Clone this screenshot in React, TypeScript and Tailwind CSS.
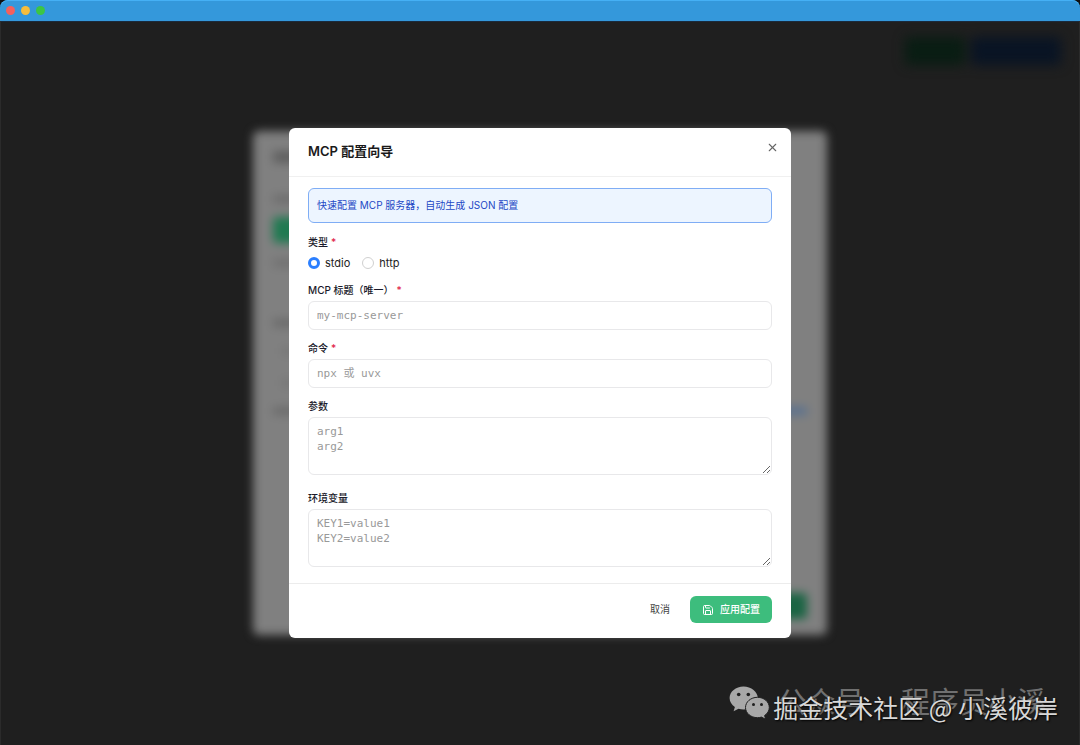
import React, { useState } from 'react';
import { Save, X } from 'lucide-react';

interface FieldProps {
  id: string;
  label: string;
  required?: boolean;
  children: React.ReactNode;
}

const inputClass =
  "block w-full rounded-md border border-[#e8e8ea] bg-white px-2 text-[11px] leading-[15px] text-gray-800 placeholder:text-[#999999] outline-none font-['DejaVu_Sans_Mono','Noto_Sans_CJK_SC',monospace]";

const Required = () => <span className="ml-[3px] text-[#e11d48]">*</span>;

const Field: React.FC<FieldProps> = ({ id, label, required, children }) => (
  <div className="flex flex-col gap-[3px]">
    <label htmlFor={id} className="block leading-[15px] font-medium text-[#1a1a2a]">
      {label}
      {required && <Required />}
    </label>
    {children}
  </div>
);

interface RadioProps {
  value: string;
  checked: boolean;
  onChange: (value: string) => void;
}

const TypeRadio: React.FC<RadioProps> = ({ value, checked, onChange }) => (
  <label className="flex items-center gap-[5px] text-[11px] text-[#222222]">
    <input
      type="radio"
      name="type"
      value={value}
      checked={checked}
      onChange={() => onChange(value)}
      className="size-3 appearance-none rounded-full border border-[#d0d0d0] bg-white checked:border-[3px] checked:border-[#2b7fff]"
    />
    {value}
  </label>
);

// Blurred page and first dialog that stay visible under the overlay
const Backdrop = () => (
  <div aria-hidden="true" className="absolute inset-0 flex overflow-hidden">
    <div className="absolute inset-x-0 top-0 flex justify-end gap-1.5 px-[18px] pt-4 blur-[6px]">
      <div className="h-7 w-[60px] rounded bg-[#091d13]" />
      <div className="h-7 w-[90px] rounded bg-[#091424]" />
    </div>
    <div className="m-auto flex h-[504px] w-[574px] flex-col rounded-md bg-[#808080] px-5 pt-5 pb-4 blur-[5px]">
      <div className="h-3 w-20 bg-[#606060]" />
      <div className="mt-8 h-2 w-16 bg-[#6c6c6c]" />
      <div className="mt-3.5 h-[26px] w-20 rounded bg-[#1f7a51]" />
      <div className="mt-4 h-2 w-16 bg-[#707070]" />
      <div className="mt-[52px] h-2 w-16 bg-[#696969]" />
      <div className="mt-5 ml-2 h-2 w-16 bg-[#777777]" />
      <div className="mt-6 ml-2 h-2 w-16 bg-[#777777]" />
      <div className="mt-5 flex justify-between">
        <div className="h-2 w-16 bg-[#6a6a6a]" />
        <div className="h-2 w-16 bg-[#58708f]" />
      </div>
      <div className="mt-auto ml-auto h-[26px] w-20 rounded bg-[#1a6443]" />
    </div>
  </div>
);

const WeChatIcon = () => (
  <svg width="41" height="34" viewBox="0 0 41 34" aria-hidden="true">
    <path
      d="M14.5 0.5C6.8 0.5 0.6 5.7 0.6 12.1c0 3.7 2.1 6.9 5.3 9l-1.3 4.2 4.9-2.5c1.6.5 3.2.8 5 .8 8 0 14.3-5.2 14.3-11.5S22.2.5 14.5.5z"
      fill="#a8a8a8"
    />
    <circle cx="9.7" cy="8.5" r="1.8" fill="#1f1f1f" />
    <circle cx="19.3" cy="8.5" r="1.8" fill="#1f1f1f" />
    <path
      d="M28.5 11.3c-6.7 0-12 4.6-12 10.2s5.3 10.2 12 10.2c1.4 0 2.7-.2 3.9-.6l4.3 2.2-1.1-3.8c2.9-1.9 4.7-4.8 4.7-8 0-5.6-5.2-10.2-11.8-10.2z"
      fill="#a8a8a8"
      stroke="#1f1f1f"
      strokeWidth="1"
    />
    <circle cx="24.5" cy="18.5" r="1.5" fill="#1f1f1f" />
    <circle cx="32.5" cy="18.5" r="1.5" fill="#1f1f1f" />
  </svg>
);

const App: React.FC = () => {
  const [type, setType] = useState('stdio');

  return (
    <div className="flex min-h-screen flex-col bg-[#101010] font-['Inter','Noto_Sans_CJK_SC',sans-serif] text-[10px]">
      <header className="flex h-[21px] shrink-0 items-center gap-1.5 rounded-t-lg bg-[#3498db] px-1.5 shadow-[inset_0_1px_0_#45b0f5]">
        <span className="size-[9px] rounded-full bg-[#f4605c]" />
        <span className="size-[9px] rounded-full bg-[#f6bd3b]" />
        <span className="size-[9px] rounded-full bg-[#3cc544]" />
      </header>

      <main className="relative flex flex-1 border-x border-[#2b2b2b] bg-[#1f1f1f] shadow-[inset_0_1px_0_#1a2a3c]">
        <Backdrop />

        <form
          role="dialog"
          aria-labelledby="dialog-title"
          onSubmit={(e) => e.preventDefault()}
          className="relative m-auto w-full max-w-[502px] rounded-md bg-white"
        >
          <div className="flex h-[49px] items-center justify-between border-b border-[#f0f0f0] pr-3 pl-[19px]">
            <h2 id="dialog-title" className="text-[13px] font-semibold text-[#1a1a1a]">
              MCP 配置向导
            </h2>
            <button type="button" aria-label="关闭" className="mb-2.5 text-[#666666]">
              <X size={13} />
            </button>
          </div>

          <div className="flex flex-col gap-[11px] px-[19px] pt-[11px] pb-4">
            <div className="mb-px flex h-[35px] items-center rounded-md border border-[#7fadf5] bg-[#edf5ff] px-2 text-[#2348c5]">
              快速配置 MCP 服务器，自动生成 JSON 配置
            </div>

            <fieldset>
              <legend className="block leading-[15px] font-medium text-[#1a1a2a]">
                类型
                <Required />
              </legend>
              <div className="mt-1 flex h-[18px] items-center gap-3">
                <TypeRadio value="stdio" checked={type === 'stdio'} onChange={setType} />
                <TypeRadio value="http" checked={type === 'http'} onChange={setType} />
              </div>
            </fieldset>

            <Field id="title" label="MCP 标题（唯一）" required>
              <input id="title" type="text" placeholder="my-mcp-server" className={`${inputClass} h-[29px]`} />
            </Field>

            <Field id="command" label="命令" required>
              <input id="command" type="text" placeholder="npx 或 uvx" className={`${inputClass} h-[29px]`} />
            </Field>

            <Field id="args" label="参数">
              <textarea id="args" placeholder={'arg1\narg2'} className={`${inputClass} mb-[5px] h-[58px] resize-y py-1.5`} />
            </Field>

            <Field id="env" label="环境变量">
              <textarea id="env" placeholder={'KEY1=value1\nKEY2=value2'} className={`${inputClass} h-[58px] resize-y py-1.5`} />
            </Field>
          </div>

          <div className="flex items-center justify-end gap-2 border-t border-[#ececec] px-[19px] pt-3 pb-[15px]">
            <button type="button" className="h-[27px] rounded-md px-3 text-[#444444]">
              取消
            </button>
            <button
              type="submit"
              className="flex h-[27px] items-center gap-1.5 rounded-md bg-[#3dbd7d] px-3 font-medium text-white"
            >
              <Save size={12} />
              应用配置
            </button>
          </div>
        </form>

        <div className="absolute right-[33px] bottom-[22px] flex items-center gap-2">
          <WeChatIcon />
          <div className="flex gap-3.5 text-[29px] leading-[40px] whitespace-nowrap text-[#707070]">
            <span>公众号</span>
            <span>·</span>
            <span>程序员小溪</span>
          </div>
        </div>
        <div className="absolute right-[21px] bottom-5 font-['Noto_Sans_CJK_SC',sans-serif] text-[25px] leading-[36px] whitespace-nowrap text-[#d8d8d8] [text-shadow:1px_1px_2px_#000]">
          掘金技术社区 @ 小溪彼岸
        </div>
      </main>
    </div>
  );
};

export default App;
